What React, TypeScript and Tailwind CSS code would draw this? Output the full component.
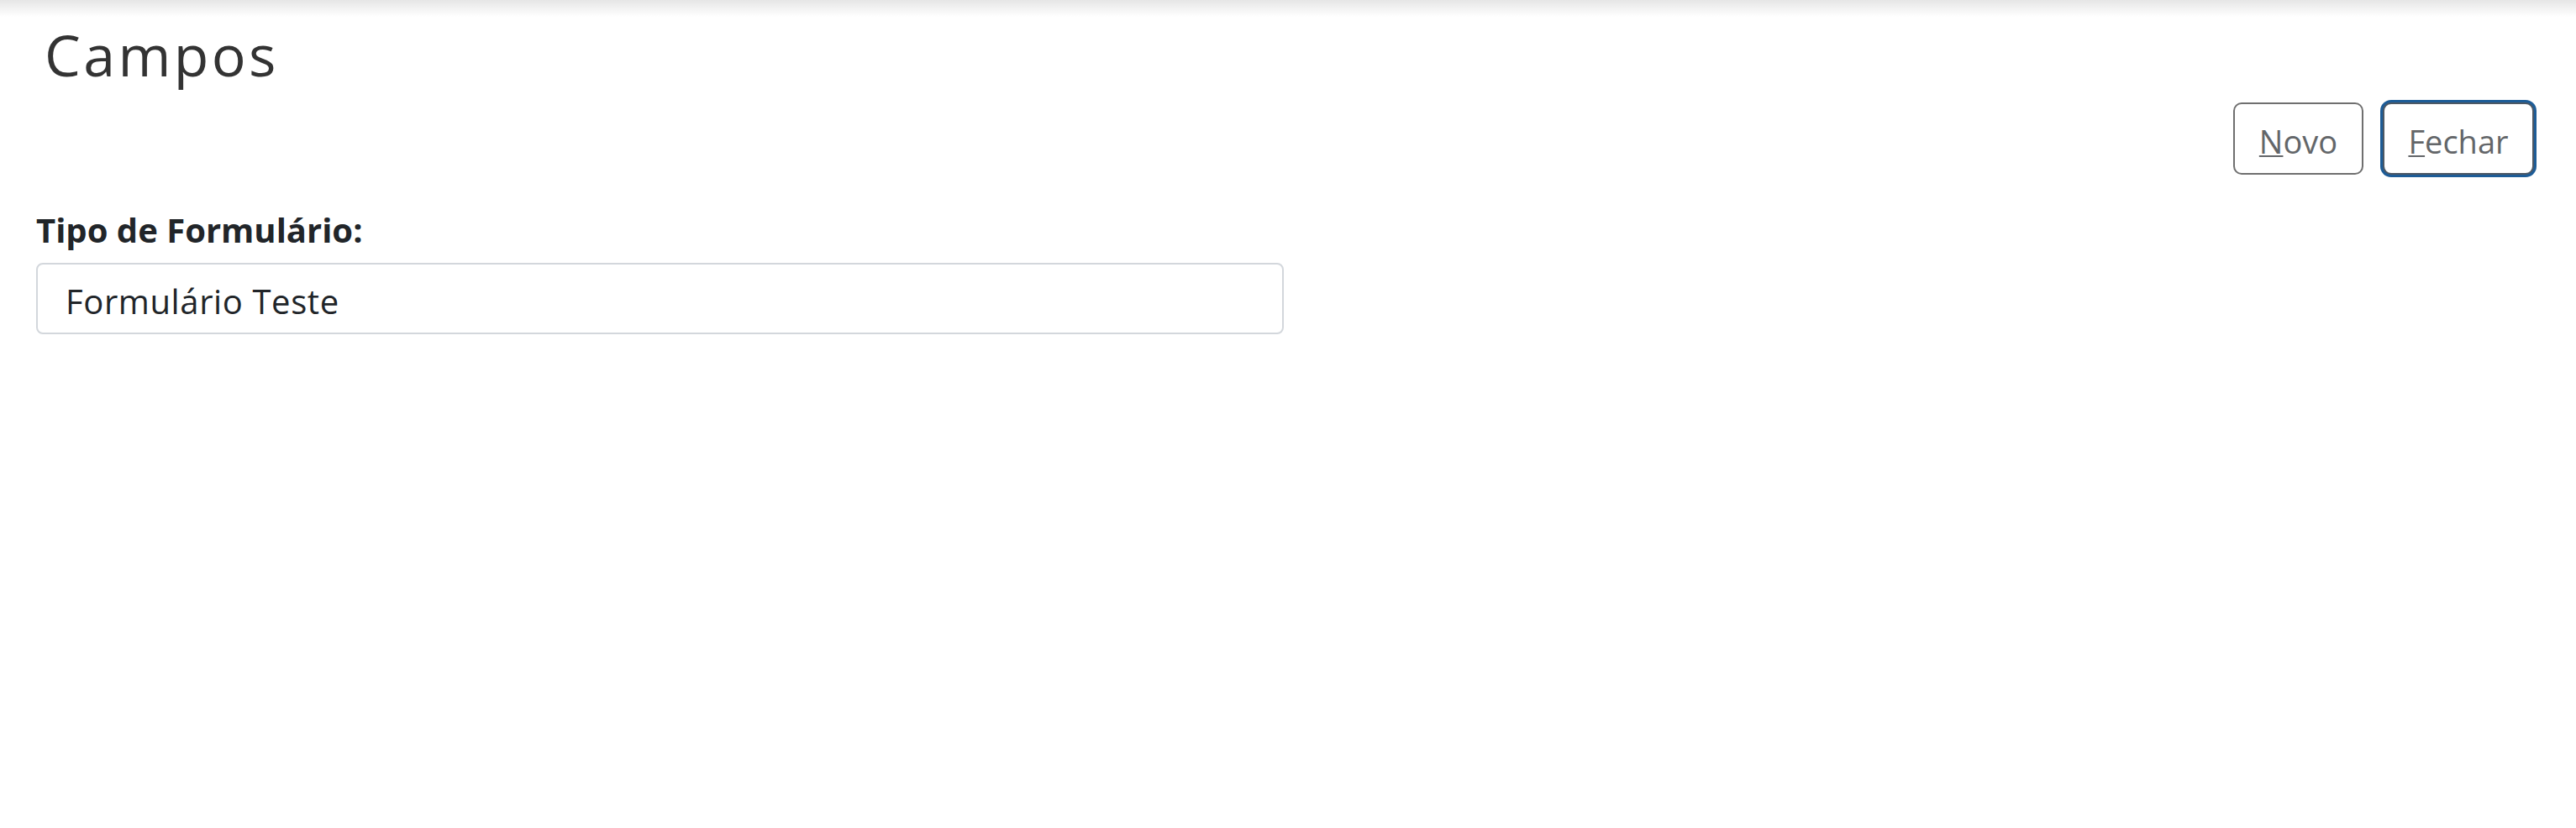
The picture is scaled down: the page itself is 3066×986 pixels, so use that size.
export default function App() {
  return (
    <div className="min-h-screen bg-white" style={{ fontFamily: '"Open Sans", Lato, sans-serif' }}>
      <div className="h-[20px] bg-gradient-to-b from-[#e6e6e6] to-white" />

      <div className="pl-[43px] pr-[50px]">
        <h2 className="mt-[11px] pl-[10px] text-[68px] leading-none font-normal tracking-[0.05em] text-[#333333]">Campos</h2>

        <div className="mt-[23px] flex justify-end gap-[23px]">
          <button
            type="button"
            className="flex h-[86px] w-[155px] items-center justify-center rounded-[10px] border-2 border-[#6f6f6f] bg-white pt-[5px] text-[38px] leading-none text-[#636669]"
          >
            <span>
              <u className="decoration-[2px] underline-offset-[2px]">N</u>ovo
            </span>
          </button>
          <button
            type="button"
            className="flex h-[86px] w-[180px] items-center justify-center rounded-[10px] border-2 border-[#4d5864] bg-white pt-[5px] text-[38px] leading-none text-[#636669] shadow-[0_0_0_3px_#1d5c97]"
          >
            <span>
              <u className="decoration-[2px] underline-offset-[2px]">F</u>echar
            </span>
          </button>
        </div>

        <label className="mt-[46px] block text-[40px] leading-none font-bold text-[#212529]">Tipo de Formulário:</label>

        <div className="mt-[19px] flex h-[85px] w-[1485px] items-center rounded-[8px] border-2 border-[#d3d7dc] bg-white pl-[33px] pt-[6px]">
          <span className="text-[40px] leading-none tracking-[0.015em] text-[#212529]">Formulário Teste</span>
        </div>
      </div>
    </div>
  );
}
